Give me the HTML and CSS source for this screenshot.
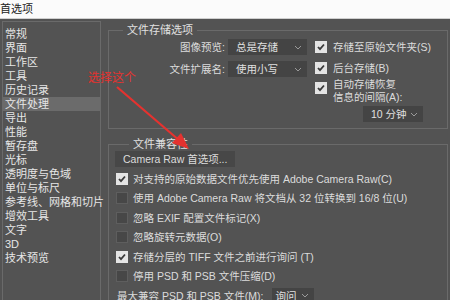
FILE: index.html
```html
<!DOCTYPE html>
<html lang="zh-CN">
<head>
    <meta charset="UTF-8">
    <title>首选项</title>
    <link rel="stylesheet" href="styles.css">
</head>
<body>

    <div class="titlebar">首选项</div>

    <div class="window">

        <!-- Category list -->
        <ul class="sidebar">
            <li>常规</li>
            <li>界面</li>
            <li>工作区</li>
            <li>工具</li>
            <li>历史记录</li>
            <li class="active">文件处理</li>
            <li>导出</li>
            <li>性能</li>
            <li>暂存盘</li>
            <li>光标</li>
            <li>透明度与色域</li>
            <li>单位与标尺</li>
            <li>参考线、网格和切片</li>
            <li>增效工具</li>
            <li>文字</li>
            <li>3D</li>
            <li>技术预览</li>
        </ul>

        <div class="main">

            <!-- File saving options -->
            <fieldset class="group save-group">
                <legend>文件存储选项</legend>
                <div class="save-cols">
                    <div class="fields">
                        <label>图像预览:</label>
                        <div class="select wide">总是存储<svg width="8" height="5" viewBox="0 0 8 5"><path d="M1 1l3 3 3-3" stroke="#9a9a9a" fill="none"/></svg></div>
                        <label>文件扩展名:</label>
                        <div class="select wide">使用小写<svg width="8" height="5" viewBox="0 0 8 5"><path d="M1 1l3 3 3-3" stroke="#9a9a9a" fill="none"/></svg></div>
                    </div>
                    <div class="checks">
                        <div class="check row1"><span class="box on"><svg width="10" height="10" viewBox="0 0 10 10"><path d="M2 5l2 2.2L8 2.5" stroke="#3a3a3a" stroke-width="1.8" fill="none"/></svg></span>存储至原始文件夹(S)</div>
                        <div class="check row2"><span class="box on"><svg width="10" height="10" viewBox="0 0 10 10"><path d="M2 5l2 2.2L8 2.5" stroke="#3a3a3a" stroke-width="1.8" fill="none"/></svg></span>后台存储(B)</div>
                        <div class="check row3"><span class="box on"><svg width="10" height="10" viewBox="0 0 10 10"><path d="M2 5l2 2.2L8 2.5" stroke="#3a3a3a" stroke-width="1.8" fill="none"/></svg></span><span>自动存储恢复<br>信息的间隔(A):</span></div>
                        <div class="select interval">10 分钟<svg width="8" height="5" viewBox="0 0 8 5"><path d="M1 1l3 3 3-3" stroke="#9a9a9a" fill="none"/></svg></div>
                    </div>
                </div>
            </fieldset>

            <!-- File compatibility -->
            <fieldset class="group compat-group">
                <legend>文件兼容性</legend>
                <div class="button">Camera Raw 首选项...</div>
                <div class="check line"><span class="box on"><svg width="10" height="10" viewBox="0 0 10 10"><path d="M2 5l2 2.2L8 2.5" stroke="#3a3a3a" stroke-width="1.8" fill="none"/></svg></span>对支持的原始数据文件优先使用 Adobe Camera Raw(C)</div>
                <div class="check line"><span class="box"></span>使用 Adobe Camera Raw 将文档从 32 位转换到 16/8 位(U)</div>
                <div class="check line"><span class="box"></span>忽略 EXIF 配置文件标记(X)</div>
                <div class="check line"><span class="box"></span>忽略旋转元数据(O)</div>
                <div class="check line"><span class="box on"><svg width="10" height="10" viewBox="0 0 10 10"><path d="M2 5l2 2.2L8 2.5" stroke="#3a3a3a" stroke-width="1.8" fill="none"/></svg></span>存储分层的 TIFF 文件之前进行询问 (T)</div>
                <div class="check line"><span class="box"></span>停用 PSD 和 PSB 文件压缩(D)</div>
                <div class="max-row">
                    <label>最大兼容 PSD 和 PSB 文件(M):</label>
                    <div class="select narrow">询问<svg width="8" height="5" viewBox="0 0 8 5"><path d="M1 1l3 3 3-3" stroke="#9a9a9a" fill="none"/></svg></div>
                </div>
            </fieldset>

        </div>
    </div>

    <!-- Red annotation drawn over the screenshot -->
    <span class="note">选择这个</span>
    <svg class="arrow" width="450" height="300" viewBox="0 0 450 300">
        <line x1="117" y1="87" x2="180" y2="141" stroke="#e5322f" stroke-width="2.2"/>
        <path d="M189 149 L172 143 L181 133 Z" fill="#e5322f"/>
    </svg>

</body>
</html>
```

FILE: styles.css
```css
/* General Styling */
* {
    box-sizing: border-box;
}

body {
    margin: 0;
    width: 450px;
    height: 300px;
    overflow: hidden;
    background-color: #535353;
    color: #dcdcdc;
    font-family: "Liberation Sans", "Noto Sans CJK SC", sans-serif;
    font-size: 11px;
    line-height: 14px;
    position: relative;
}

.titlebar {
    height: 19px;
    line-height: 18px;
    background: #fbfbfb;
    color: #222;
    border-bottom: 1px solid #cfcfcf;
}

.window {
    display: flex;
    padding: 2px 2px 0 2px;
    height: 281px;
}

/* Sidebar */
.sidebar {
    list-style: none;
    margin: 0;
    padding: 5px 0 0 0;
    width: 99px;
    border: 1px solid #6a6a6a;
    border-bottom: none;
}

.sidebar li {
    height: 14px;
    line-height: 14px;
    padding-left: 2px;
    color: #e6e6e6;
    white-space: nowrap;
}

.sidebar li.active {
    background-color: #6b6b6b;
}

/* Main area */
.main {
    flex: 1;
    margin-left: 7px;
    font-size: 10.5px;
}

.group {
    margin: 2px 0 0 0;
    padding: 0;
    border: 1px solid #6a6a6a;
    min-width: 0;
}

.group legend {
    margin-left: 14px;
    padding: 0 4px;
    line-height: 14px;
    color: #e0e0e0;
    font-size: 11px;
}

.save-group {
    padding: 2px 0 6px 0;
}

.save-cols {
    display: flex;
}

.fields {
    display: grid;
    grid-template-columns: 116px 79px;
    column-gap: 3px;
    row-gap: 6px;
    align-items: center;
    align-content: start;
}

.fields label {
    text-align: right;
}

.select {
    height: 16px;
    background-color: #444;
    display: flex;
    align-items: center;
    justify-content: space-between;
    padding: 0 5px 0 8px;
    color: #e0e0e0;
}

.checks {
    margin-left: 8px;
    display: flex;
    flex-direction: column;
}

.check {
    display: flex;
    align-items: center;
    gap: 6px;
    white-space: nowrap;
}

.check.row1 {
    height: 16px;
}

.check.row2 {
    height: 16px;
    margin-top: 5px;
}

.check.row3 {
    margin-top: 2px;
    align-items: flex-start;
    line-height: 13px;
}

.check.row3 .box {
    margin-top: 4px;
}

.box {
    width: 12px;
    height: 12px;
    flex: none;
    background-color: #474747;
    border: 1px solid #5e5e5e;
    display: flex;
    align-items: center;
    justify-content: center;
}

.box.on {
    background-color: #e4e4e4;
    border-color: #e4e4e4;
}

.select.interval {
    width: 60px;
    margin: 2px 0 0 48px;
}

/* Compatibility group */
.compat-group {
    margin-top: 8px;
    padding: 0 0 0 6px;
}

.button {
    width: 120px;
    height: 16px;
    line-height: 16px;
    background-color: #474747;
    padding-left: 8px;
    margin-bottom: 2px;
}

.check.line {
    height: 19.5px;
    gap: 5px;
    padding-left: 1px;
}

.max-row {
    height: 19.5px;
    display: flex;
    align-items: center;
    padding-left: 2px;
}

.select.narrow {
    width: 42px;
    margin-left: 9px;
    padding-left: 3px;
}

/* Annotation */
.note {
    position: absolute;
    left: 88px;
    top: 71px;
    color: #e5322f;
    font-size: 12px;
}

.arrow {
    position: absolute;
    left: 0;
    top: 0;
    pointer-events: none;
}
```
